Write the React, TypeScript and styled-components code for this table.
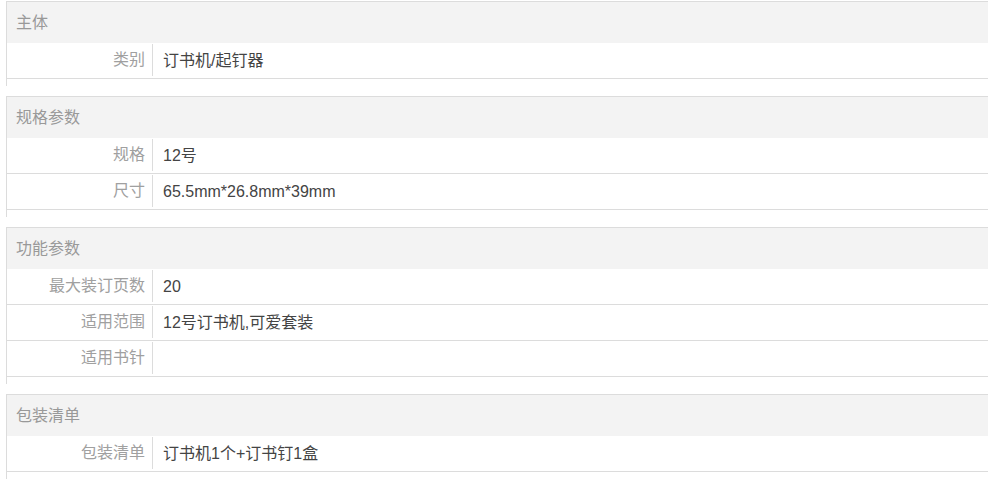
import React from "react";
import styled, { createGlobalStyle } from "styled-components";

const Global = createGlobalStyle`
  html, body { margin: 0; padding: 0; background: #fff; }
  body { font-family: "Liberation Sans", Arial, "Noto Sans CJK SC", sans-serif; }
`;

const Page = styled.div`
  padding: 1px 10px 0 6px;
`;

const Section = styled.section`
  border-top: 1px solid #dcdcdc;
  border-left: 1px solid #dcdcdc;
  padding-bottom: 7px;
  margin-bottom: 10px;
`;

const Header = styled.div`
  height: 41px;
  line-height: 41px;
  background: #f3f3f3;
  padding-left: 9px;
  font-size: 16px;
  color: #999;
`;

const Row = styled.div`
  display: grid;
  grid-template-columns: 146px 1fr;
  height: 35px;
  border-bottom: 1px solid #dcdcdc;
`;

const Label = styled.div`
  margin: 1px 0 2px;
  border-right: 1px solid #dcdcdc;
  line-height: 32px;
  text-align: right;
  padding-right: 7px;
  font-size: 16px;
  color: #a0a0a0;
  white-space: nowrap;
`;

const Value = styled.div`
  line-height: 35px;
  padding-left: 10px;
  font-size: 16px;
  color: #444;
  white-space: nowrap;
`;

const data: { title: string; rows: [string, string][] }[] = [
  { title: "主体", rows: [["类别", "订书机/起钉器"]] },
  {
    title: "规格参数",
    rows: [
      ["规格", "12号"],
      ["尺寸", "65.5mm*26.8mm*39mm"],
    ],
  },
  {
    title: "功能参数",
    rows: [
      ["最大装订页数", "20"],
      ["适用范围", "12号订书机,可爱套装"],
      ["适用书针", ""],
    ],
  },
  { title: "包装清单", rows: [["包装清单", "订书机1个+订书钉1盒"]] },
];

export default function App() {
  return (
    <>
      <Global />
      <Page>
        {data.map((s) => (
          <Section key={s.title}>
            <Header>{s.title}</Header>
            {s.rows.map(([k, v]) => (
              <Row key={k}>
                <Label>{k}</Label>
                <Value>{v}</Value>
              </Row>
            ))}
          </Section>
        ))}
      </Page>
    </>
  );
}
